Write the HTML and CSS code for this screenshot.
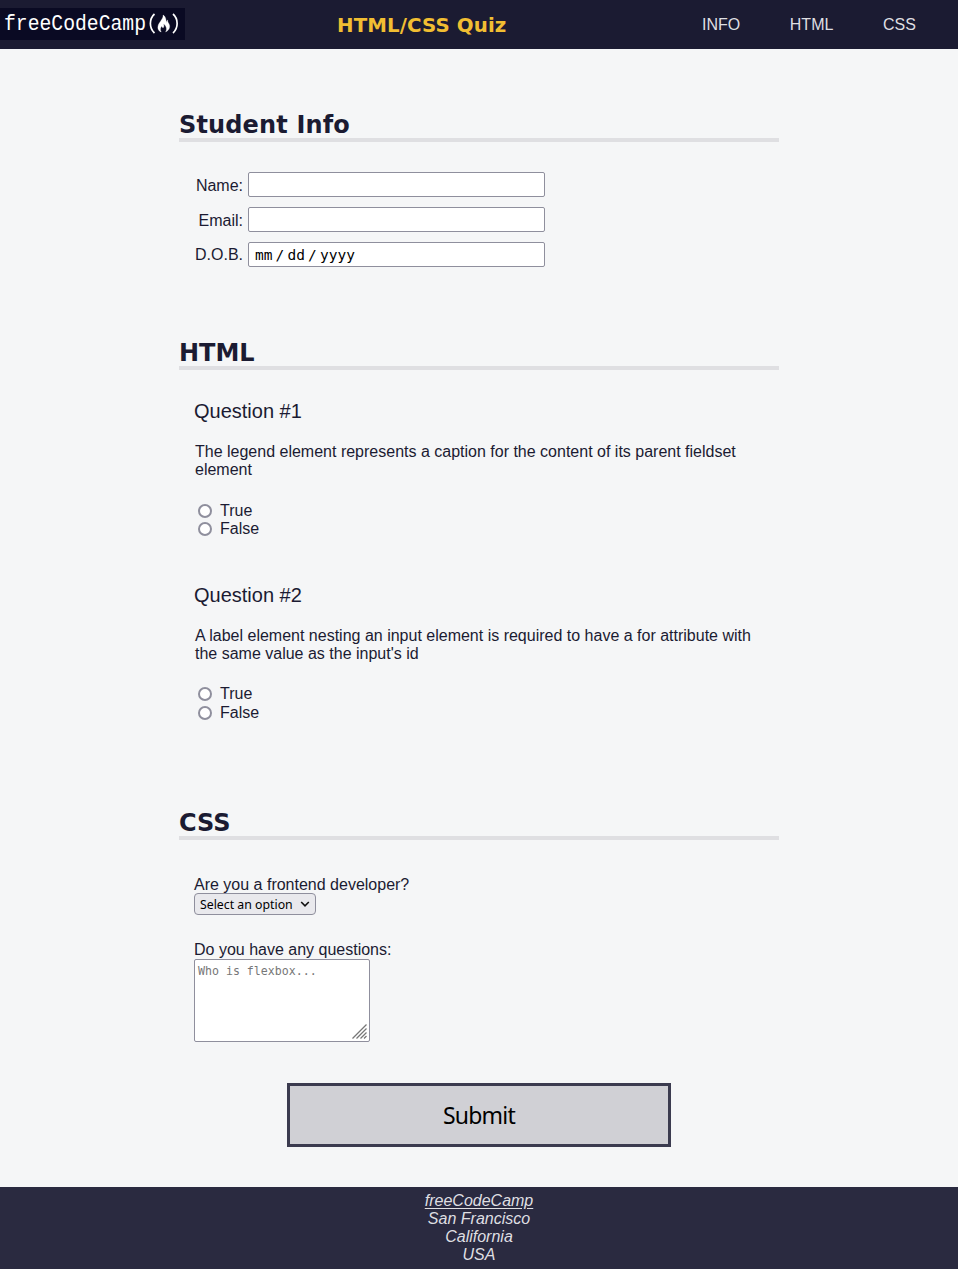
FILE: index.html
```html
<!DOCTYPE html>
<html lang="en">
<head>
<meta charset="utf-8">
<title>HTML/CSS Quiz</title>
<link rel="stylesheet" href="styles.css">
</head>
<body>
<header class="header">
  <svg class="logo" width="185" height="32" viewBox="0 0 185 32" role="img" aria-label="freeCodeCamp">
    <rect width="185" height="32" fill="#0a0a23"/>
    <text class="logo-text" x="4" y="21.5" textLength="142" lengthAdjust="spacingAndGlyphs">freeCodeCamp</text>
    <path d="M154.500 6c-5.500 5-5.500 14 0 19M173 6c5.500 5 5.500 14 0 19" fill="none" stroke="#fff" stroke-width="1.700"/>
    <path d="M163 7c.7 3.600-3.900 7-4.900 10.700-.9 3.300.8 5.600 3.100 6.300-1.500-2.600-.7-4.300.7-6 .2 1.700 1.100 2.200 1.700 1.200.6-.9.300-2.300-.2-3.400 2.500 1.600 4.200 5.300 2.200 8.200 3.500-1.600 5.200-5.300 3.300-8.300-.8-1.300-1.400-2.100-1.300-3.600-1 .6-1.100 1.700-.7 2.700C165.500 13 166.700 9.100 163 7z" fill="#fff" stroke="#fff" stroke-width=".3"/>
  </svg>
  <h1 class="title">HTML/CSS Quiz</h1>
  <nav class="nav"><a>INFO</a><a>HTML</a><a>CSS</a></nav>
</header>
<main class="main">
  <section class="section student">
    <h2 class="heading heading-info">Student Info</h2>
    <div class="fields">
      <label class="field"><span class="label">Name:</span><input class="input" type="text"></label>
      <label class="field"><span class="label">Email:</span><input class="input" type="text"></label>
      <div class="field"><span class="label dob">D.O.B.</span><div class="input date"><span>mm</span><span>/</span><span>dd</span><span>/</span><span>yyyy</span></div></div>
    </div>
  </section>
  <section class="section html">
    <h2 class="heading">HTML</h2>
    <div class="question">
      <h3 class="number">Question #1</h3>
      <p class="prompt">The legend element represents a caption for the content of its parent fieldset element</p>
      <label class="answer"><input class="radio" type="radio" name="q1">True</label>
      <label class="answer"><input class="radio" type="radio" name="q1">False</label>
    </div>
    <div class="question second">
      <h3 class="number">Question #2</h3>
      <p class="prompt">A label element nesting an input element is required to have a for attribute with the same value as the input's id</p>
      <label class="answer"><input class="radio" type="radio" name="q2">True</label>
      <label class="answer last"><input class="radio" type="radio" name="q2">False</label>
    </div>
  </section>
  <section class="section css">
    <h2 class="heading">CSS</h2>
    <div class="form">
      <div class="form-label">Are you a frontend developer?</div>
      <div class="select"><span>Select an option</span><svg width="10" height="8" viewBox="0 0 10 8"><path d="M1.200 2l3.800 3.800L8.800 2" fill="none" stroke="#111" stroke-width="1.600"/></svg></div>
      <div class="form-label ask">Do you have any questions:</div>
      <div class="textarea"><span>Who is flexbox...</span><svg class="grip" width="15" height="15" viewBox="0 0 15 15"><path d="M.5 14.500l14-14M4.500 14.500l10-10M8.500 14.500l6-6M12 14.500l2.500-2.500" fill="none" stroke="#777" stroke-width="1.300"/></svg></div>
    </div>
  </section>
  <button class="submit">Submit</button>
</main>
<footer class="footer">
  <address class="address"><a class="link">freeCodeCamp</a><br>San Francisco<br>California<br>USA</address>
</footer>
</body>
</html>
```
FILE: styles.css
```css
* { box-sizing: border-box; }
body {
  margin: 0;
  background: #f5f6f7;
  color: #1b1b32;
  font: 16px/18px "Liberation Sans", Arial, sans-serif;
}
h1, h2, h3, p { margin: 0; }
.header {
  display: grid;
  grid-template-columns: 337px 1fr 256px;
  height: 49px;
  background: #1b1b32;
}
.logo { margin-top: 8px; }
.logo-text { fill: #fff; font: 22px "Liberation Mono", monospace; }
.title {
  padding-top: 13px;
  color: #f1be32;
  font: bold 19.8px/25px Verdana, "DejaVu Sans", sans-serif;
  letter-spacing: .1px;
}
.nav { display: flex; gap: 49.6px; padding-top: 16px; color: #dfdfe2; }
.main { width: 600px; margin: 0 auto; }
.section { display: flow-root; }
.heading {
  height: 33px;
  border-bottom: 4px solid #dfdfe2;
  font: bold 24px/32px Verdana, "DejaVu Sans", sans-serif;
  white-space: nowrap;
}
.heading-info { letter-spacing: .15px; }
.student { height: 228px; margin-top: 60px; }
.fields { display: flex; flex-direction: column; gap: 10px; padding-top: 30px; }
.field { display: flex; gap: 5px; height: 25px; }
.label { width: 64px; padding-top: 5px; text-align: right; }
.dob { padding-top: 4px; }
.input {
  width: 297px;
  height: 25px;
  margin: 0;
  border: 1px solid #8f8f9d;
  border-radius: 2px;
  background: #fff;
  appearance: none;
}
.date {
  display: flex;
  gap: 3px;
  padding-left: 6px;
  color: #000;
  font: 14.5px/24px "DejaVu Sans Mono", monospace;
}
.date span:nth-child(even) { width: 9px; text-align: center; }
.html { height: 470px; }
.question { padding: 29px 15px 0; }
.second { padding-top: 45px; }
.number { font-size: 20px; font-weight: 400; line-height: 24px; }
.prompt { padding: 20px 0 23px 1px; }
.answer { display: flex; align-items: center; height: 18px; }
.second .prompt { padding-bottom: 22px; }
.answer.last { margin-top: 1px; }
.radio {
  width: 14px;
  height: 14px;
  margin: 0 8px 0 4px;
  border: 2px solid #8f8f9d;
  border-radius: 50%;
  background: #fff;
  appearance: none;
}
.form { padding: 36px 15px 0; }
.form-label { height: 17px; }
.select {
  display: flex;
  align-items: center;
  justify-content: space-between;
  width: 122px;
  height: 22px;
  padding: 0 5px;
  border: 1px solid #8f8f9d;
  border-radius: 4px;
  background: #e9e9ed;
  color: #000;
  font: 12.300px/22px "Noto Sans", sans-serif;
  white-space: nowrap;
}
.select span { padding-top: 1px; }
.ask { margin-top: 26px; }
.textarea {
  position: relative;
  width: 176px;
  height: 83px;
  margin-top: 1px;
  padding: 3px 3px;
  border: 1px solid #8f8f9d;
  border-radius: 2px;
  background: #fff;
  color: #777;
  font: 11.600px/16px "DejaVu Sans Mono", monospace;
}
.grip { position: absolute; right: 2px; bottom: 2px; }
.submit {
  display: block;
  width: 384px;
  height: 64px;
  margin: 41px auto 40px;
  padding: 0;
  border: 3px solid #3b3b4f;
  background: #d0d0d5;
  color: #000;
  font: 23px/58px "Noto Sans", sans-serif;
  letter-spacing: -.8px;
}
.footer { height: 82px; padding-top: 5px; background: #2a2a40; color: #dfdfe2; text-align: center; }
.link { text-decoration: underline; text-underline-offset: 2px; }
```
